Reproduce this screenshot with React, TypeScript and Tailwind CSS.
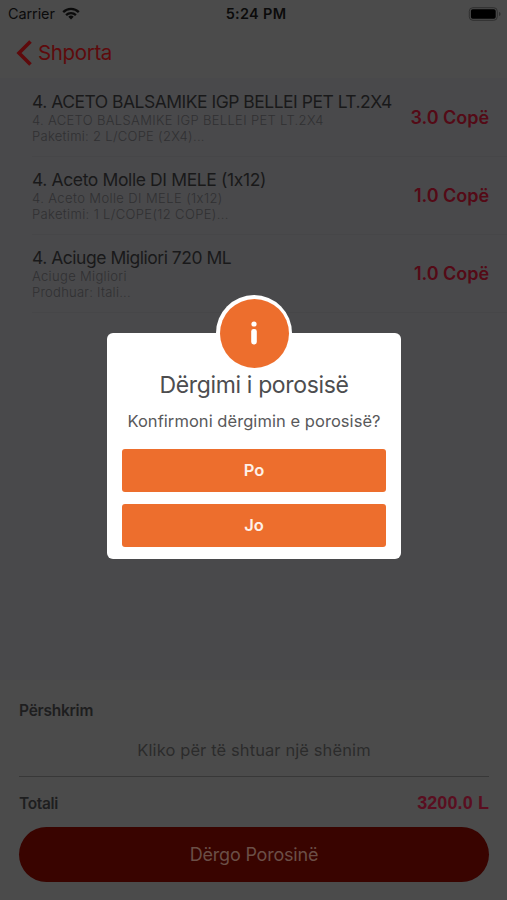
import { ReactNode } from "react";

type Item = {
  title: string;
  lines: string[];
  quantity: string;
  titleClass: string;
  lineClass: string[];
};

const ITEMS: Item[] = [
  {
    title: "4. ACETO BALSAMIKE IGP BELLEI PET LT.2X4",
    lines: ["4. ACETO BALSAMIKE IGP BELLEI PET LT.2X4", "Paketimi: 2 L/COPE (2X4)..."],
    quantity: "3.0 Copë",
    titleClass: "tracking-[-0.5px]",
    lineClass: ["tracking-[0.33px]", "tracking-[0.3px]"],
  },
  {
    title: "4. Aceto Molle DI MELE (1x12)",
    lines: ["4. Aceto Molle DI MELE (1x12)", "Paketimi: 1 L/COPE(12 COPE)..."],
    quantity: "1.0 Copë",
    titleClass: "tracking-[-0.38px]",
    lineClass: ["tracking-[0.4px]", "tracking-[0.36px]"],
  },
  {
    title: "4. Aciuge Migliori 720 ML",
    lines: ["Aciuge Migliori", "Prodhuar: Itali..."],
    quantity: "1.0 Copë",
    titleClass: "tracking-[-0.48px]",
    lineClass: ["tracking-[0.33px]", "tracking-[0.25px]"],
  },
];

function StatusBar() {
  return (
    <div className="grid h-[27px] grid-cols-3 items-center pl-2 pr-[6px] text-[#0b0b0b]">
      <div className="flex items-center gap-[7px]">
        <span className="text-[14.5px] tracking-[-0.1px]">Carrier</span>
        <svg width="18" height="13" viewBox="0 0 18 13" fill="none" stroke="currentColor" strokeWidth="2.3">
          <path d="M1.2 5.1a11 11 0 0 1 15.6 0" />
          <path d="M4.1 8.1a7 7 0 0 1 9.8 0" />
          <path d="M9 12.4 6.3 9.7a3.9 3.9 0 0 1 5.4 0Z" fill="currentColor" stroke="none" />
        </svg>
      </div>
      <span className="pl-[3px] text-center text-[14.5px] font-semibold tracking-[0.3px] whitespace-nowrap">5:24 PM</span>
      <svg className="justify-self-end" width="33" height="14" viewBox="0 0 33 14">
        <rect x="1.3" y="0.7" width="28" height="12.6" rx="3.6" fill="none" stroke="#2f2f2f" />
        <rect x="2.9" y="2.3" width="24.8" height="9.4" rx="1.8" fill="#000" />
        <path d="M31 5v4c1-.4 1.5-1.1 1.5-2S32 5.4 31 5Z" fill="#2f2f2f" />
      </svg>
    </div>
  );
}

function Header() {
  return (
    <header className="h-[78px] bg-[#4b4b4b]">
      <StatusBar />
      <div className="flex h-[51px] items-center gap-[6px] pl-4 text-[#5e0a0c]">
        <svg width="16" height="26" viewBox="0 0 16 26" fill="none" stroke="currentColor" strokeWidth="3.6">
          <path d="M14.5 1.5 3 13l11.5 11.5" />
        </svg>
        <span className="pt-px text-[20.5px] leading-none tracking-[-0.35px]">Shporta</span>
      </div>
    </header>
  );
}

function Row({ item }: { item: Item }) {
  return (
    <li className="ml-8 flex h-[78px] items-center justify-between border-b border-[#464648] pr-[18px] whitespace-nowrap">
      <div>
        <p className={`text-[17.5px] leading-[21px] text-[#19191a] ${item.titleClass}`}>{item.title}</p>
        {item.lines.map((line, index) => (
          <p key={line} className={`text-[13px] leading-4 font-light text-[#303032] ${item.lineClass[index]}`}>
            {line}
          </p>
        ))}
      </div>
      <span className="text-[18px] font-semibold tracking-[-0.05px] text-[#540a16]">{item.quantity}</span>
    </li>
  );
}

function Footer() {
  return (
    <footer className="flex h-[220px] flex-col bg-[#4b4b4b] pr-[18px] pl-[19px] whitespace-nowrap">
      <p className="mt-[21px] text-[15.5px] leading-5 font-semibold tracking-[-0.25px] text-[#1e1e1f]">Përshkrim</p>
      <p className="mt-[19px] text-center text-[16.5px] leading-5 tracking-[0.1px] text-[#2b2b2b]">
        Kliko për të shtuar një shënim
      </p>
      <div className="mt-4 h-px bg-[#383838]" />
      <div className="mt-4 flex h-5 items-center justify-between">
        <span className="pt-px text-[15.5px] font-semibold tracking-[-0.35px] text-[#1e1e1f]">Totali</span>
        <span className="font-['Liberation_Sans',sans-serif] text-[18px] font-bold tracking-[0.1px] text-[#5a0e20]">
          3200.0 L
        </span>
      </div>
      <button className="mt-[14px] h-[55px] rounded-full bg-[#390400] text-[18px] tracking-[-0.2px] text-[#6b4f47]">
        Dërgo Porosinë
      </button>
    </footer>
  );
}

function AlertButton({ children }: { children: ReactNode }) {
  return (
    <button className="h-[43px] rounded-[3px] bg-[#ed6e2d] text-[16.5px] font-semibold text-[#fdf0e8]">
      {children}
    </button>
  );
}

function Alert() {
  return (
    <div className="absolute top-[333px] left-[107px] flex h-[226px] w-[294px] flex-col rounded-[6px] bg-white px-[15px] text-center whitespace-nowrap">
      <div className="absolute -top-[38px] left-[109px] flex size-[76px] items-center justify-center rounded-full bg-white">
        <div className="flex size-[69px] items-center justify-center rounded-full bg-[#ed6e2d]">
          <svg width="8" height="24" viewBox="0 0 8 24" fill="#fff">
            <circle cx="4" cy="3" r="2.6" />
            <rect x="1.2" y="8" width="5.6" height="15.4" rx="2.4" />
          </svg>
        </div>
      </div>
      <h2 className="mt-[38px] text-[23px] leading-7 tracking-[-0.35px] text-[#4d4d4f]">Dërgimi i porosisë</h2>
      <p className="mt-3 text-[16.5px] leading-5 tracking-[0.05px] text-[#59595b]">Konfirmoni dërgimin e porosisë?</p>
      <div className="mt-[18px] flex flex-col gap-3">
        <AlertButton>Po</AlertButton>
        <AlertButton>Jo</AlertButton>
      </div>
    </div>
  );
}

export default function App() {
  return (
    <div className="relative flex h-[900px] w-[507px] flex-col overflow-hidden bg-[#49494b] font-['Inter',sans-serif]">
      <Header />
      <ul className="flex-1 pt-px">
        {ITEMS.map((item) => (
          <Row key={item.title} item={item} />
        ))}
      </ul>
      <Footer />
      <Alert />
    </div>
  );
}
